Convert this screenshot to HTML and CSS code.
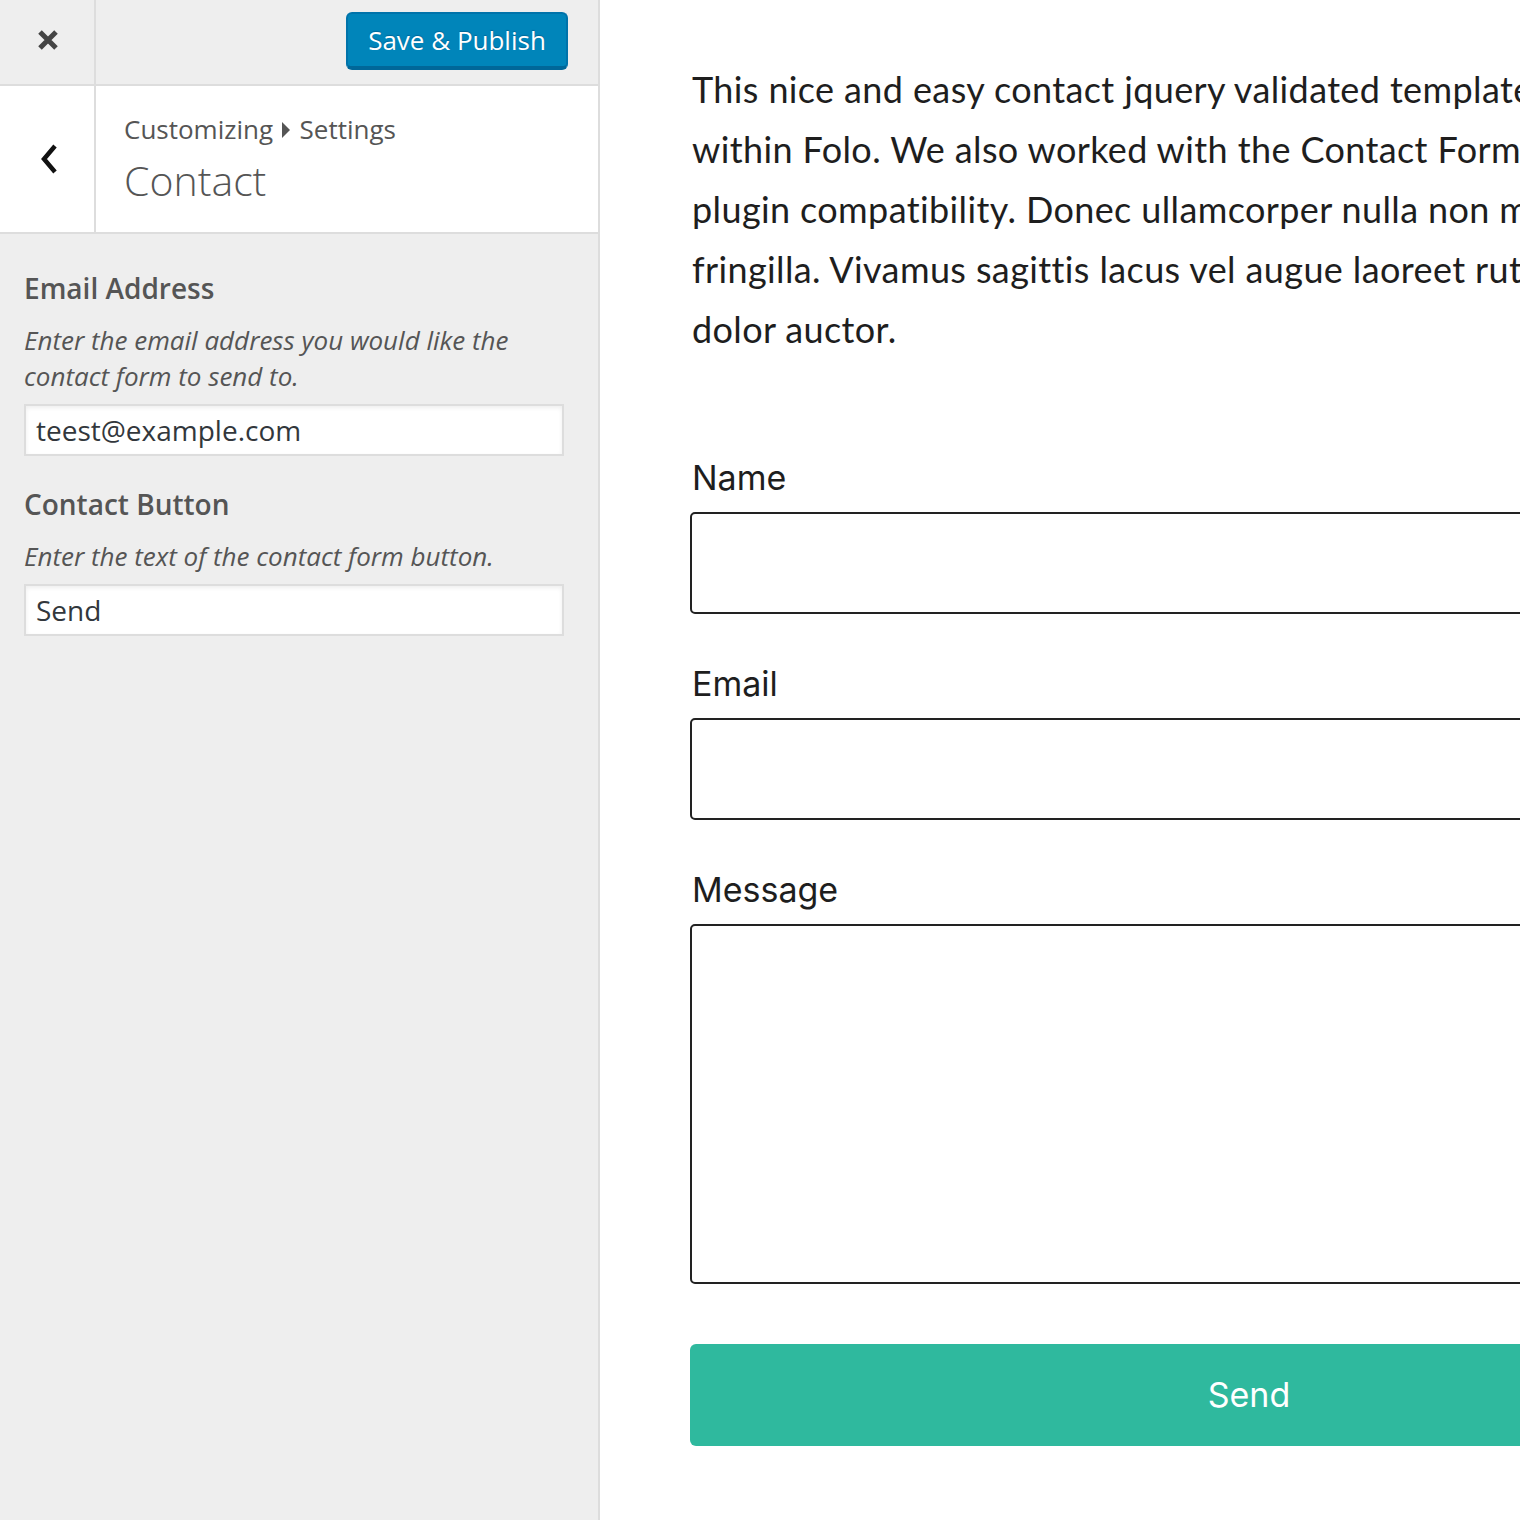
FILE: index.html
```html
<!DOCTYPE html>
<html>
<head>
<meta charset="utf-8">
<link rel="stylesheet" href="styles.css">
</head>
<body>
<div class="app">
  <aside class="sidebar">
    <div class="topbar">
      <div class="close-btn">
        <svg width="22" height="22" viewBox="0 0 22 22"><path d="M3 3 L19 19 M19 3 L3 19" stroke="#444" stroke-width="5" stroke-linecap="butt"/></svg>
      </div>
      <div class="topbar-main">
        <button class="publish">Save &amp; Publish</button>
      </div>
    </div>
    <div class="section-head">
      <div class="back-btn">
        <svg width="18" height="30" viewBox="0 0 18 30"><path d="M15 2 L4 15 L15 28" fill="none" stroke="#111" stroke-width="4.5"/></svg>
      </div>
      <div class="section-title">
        <div class="crumbs">Customizing <span class="caret"></span> Settings</div>
        <div class="title">Contact</div>
      </div>
    </div>
    <div class="controls">
      <div class="control">
        <div class="c-label">Email Address</div>
        <div class="c-desc">Enter the email address you would like the contact form to send to.</div>
        <div class="c-input">teest@example.com</div>
      </div>
      <div class="control">
        <div class="c-label">Contact Button</div>
        <div class="c-desc">Enter the text of the contact form button.</div>
        <div class="c-input">Send</div>
      </div>
    </div>
  </aside>
  <main class="preview">
    <div class="intro">
      <span class="line">This nice and easy contact jquery validated template is built</span>
      <span class="line">within Folo. We also worked with the Contact Form 7 for</span>
      <span class="line">plugin compatibility. Donec ullamcorper nulla non metus auctor</span>
      <span class="line">fringilla. Vivamus sagittis lacus vel augue laoreet rutrum faucibus</span>
      <span class="line">dolor auctor.</span>
    </div>
    <form class="form">
      <div class="f-label first">Name</div>
      <div class="f-input"></div>
      <div class="f-label">Email</div>
      <div class="f-input"></div>
      <div class="f-label">Message</div>
      <div class="f-textarea"></div>
      <div class="f-send">Send</div>
    </form>
  </main>
</div>
</body>
</html>
```
FILE: styles.css
```css
html, body {
  margin: 0;
  padding: 0;
  background: #fff;
}
.app {
  display: flex;
  width: 1520px;
  height: 1520px;
  overflow: hidden;
}
.sidebar {
  width: 598px;
  flex: 0 0 598px;
  background: #eee;
  border-right: 2px solid #ddd;
  font-family: "Open Sans", "Liberation Sans", sans-serif;
  color: #555;
}
.topbar {
  display: flex;
  height: 84px;
  border-bottom: 2px solid #ddd;
}
.close-btn {
  width: 96px;
  border-right: 2px solid #ddd;
  display: flex;
  align-items: center;
  justify-content: center;
  padding: 0 0 4px 2px;
  box-sizing: border-box;
}
.topbar-main {
  flex: 1;
  display: flex;
  justify-content: flex-end;
  align-items: flex-start;
  padding: 12px 30px 0 0;
}
.publish {
  width: 222px;
  height: 58px;
  background: #0085ba;
  border: 2px solid #0073aa;
  border-bottom: 4px solid #006799;
  border-radius: 6px;
  color: #fff;
  font-family: "Open Sans", "Liberation Sans", sans-serif;
  font-size: 26px;
  line-height: 50px;
  padding: 0;
  text-shadow: 0 -1px 1px #006799;
}
.section-head {
  display: flex;
  height: 146px;
  background: #fff;
  border-bottom: 2px solid #ddd;
}
.back-btn {
  width: 96px;
  border-right: 2px solid #ddd;
  display: flex;
  align-items: center;
  justify-content: center;
  padding: 0 0 0 4px;
  box-sizing: border-box;
}
.section-title {
  padding: 24px 0 0 28px;
}
.crumbs {
  font-size: 26px;
  line-height: 38px;
  color: #555;
}
.caret {
  display: inline-block;
  width: 0;
  height: 0;
  border-top: 8px solid transparent;
  border-bottom: 8px solid transparent;
  border-left: 8px solid #555;
  margin: 0 3px 0 2px;
  vertical-align: 1px;
}
.title {
  font-size: 41px;
  font-weight: 300;
  line-height: 56px;
  color: #555;
  margin-top: 4px;
}
.controls {
  padding: 34px 34px 0 24px;
}
.control {
  margin-bottom: 28px;
}
.c-label {
  font-size: 28px;
  font-weight: 600;
  line-height: 40px;
}
.c-desc {
  font-size: 26px;
  font-style: italic;
  line-height: 36px;
  margin-top: 14px;
  padding-right: 20px;
}
.c-input {
  margin-top: 10px;
  height: 48px;
  background: #fff;
  border: 2px solid #ddd;
  box-shadow: inset 0 2px 4px rgba(0,0,0,0.07);
  font-size: 28px;
  line-height: 48px;
  color: #32373c;
  padding-left: 10px;
}
.preview {
  flex: 1;
  overflow: hidden;
  padding: 59px 0 0 92px;
  color: #1e1e1e;
}
.intro {
  font-family: "Lato", "Liberation Sans", sans-serif;
  font-size: 36px;
  line-height: 60px;
  width: 1200px;
  letter-spacing: 0.38px;
}
.line {
  display: block;
  white-space: nowrap;
}
.form {
  width: 1118px;
  margin-left: -2px;
  font-family: "Inter", "Liberation Sans", sans-serif;
}
.f-label {
  font-size: 34px;
  line-height: 40px;
  margin: 50px 0 14px 2px;
  color: #1e1e1e;
}
.f-label.first {
  margin-top: 99px;
}
.f-input {
  height: 98px;
  border: 2px solid #222;
  border-radius: 5px;
}
.f-textarea {
  height: 356px;
  border: 2px solid #222;
  border-radius: 5px;
}
.f-send {
  margin-top: 60px;
  height: 102px;
  background: #2fb99e;
  border-radius: 6px;
  color: #fff;
  font-size: 34px;
  line-height: 102px;
  text-align: center;
}
```
